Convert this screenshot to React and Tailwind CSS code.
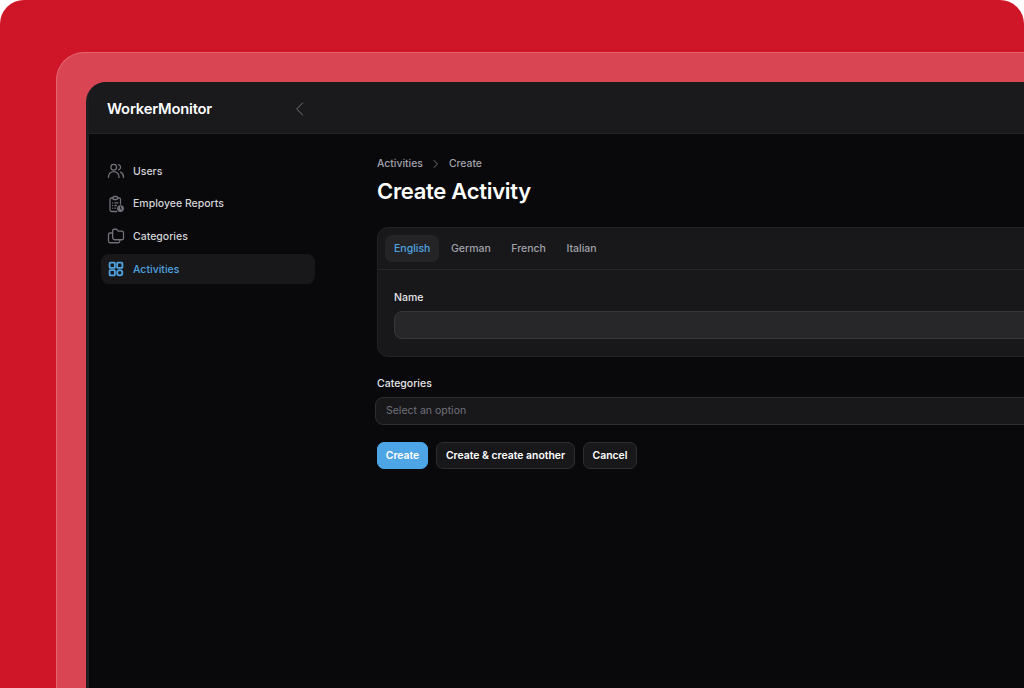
import React from "react";

const font = { fontFamily: "Inter, sans-serif" };

function UsersIcon() {
  return (
    <svg viewBox="0 0 24 24" fill="none" stroke="currentColor" strokeWidth="1.7" strokeLinecap="round" strokeLinejoin="round" className="w-[18px] h-[18px]">
      <circle cx="9" cy="7" r="3.8" />
      <path d="M2 20.5v-.8a7 7 0 0 1 14 0v.8" />
      <path d="M15.5 3.4a3.8 3.8 0 0 1 0 7.2" />
      <path d="M22 20.5v-.8a7 7 0 0 0-3.8-6.2" />
    </svg>
  );
}

function ReportIcon() {
  return (
    <svg viewBox="0 0 24 24" fill="none" stroke="currentColor" strokeWidth="1.7" strokeLinecap="round" strokeLinejoin="round" className="w-[18px] h-[18px]">
      <path d="M8 4H6a2 2 0 0 0-2 2v14a2 2 0 0 0 2 2h7" />
      <path d="M14 4h2a2 2 0 0 1 2 2v6" />
      <rect x="8" y="2" width="6" height="4" rx="1.2" />
      <path d="M7.5 10.5h.01M10.5 10.5h4M7.5 14h.01M10.5 14h2M7.5 17.5h.01M10.5 17.5h1" />
      <circle cx="18" cy="18" r="4.5" fill="currentColor" stroke="none" />
      <path d="M18 15.8v2.4l1.5.8" stroke="#09090b" strokeWidth="1.2" />
    </svg>
  );
}

function FolderIcon() {
  return (
    <svg viewBox="0 0 24 24" fill="none" stroke="currentColor" strokeWidth="1.7" strokeLinecap="round" strokeLinejoin="round" className="w-[18px] h-[18px]">
      <path d="M7.5 15V5a2 2 0 0 1 2-2h3.2l2.3 2.6h5a2 2 0 0 1 2 2v7.4a2 2 0 0 1-2 2h-10a2 2 0 0 1-2-2Z" />
      <path d="M7.5 8H4a2 2 0 0 0-2 2v9a2 2 0 0 0 2 2h11a2 2 0 0 0 2-2v-2" />
    </svg>
  );
}

function GridIcon() {
  return (
    <svg viewBox="0 0 24 24" fill="none" stroke="currentColor" strokeWidth="2.4" strokeLinejoin="round" className="w-[18px] h-[18px]">
      <rect x="3.5" y="3.5" width="7" height="7" rx="0.8" />
      <rect x="13.5" y="3.5" width="7" height="7" rx="0.8" />
      <rect x="3.5" y="13.5" width="7" height="7" rx="0.8" />
      <circle cx="17" cy="17" r="3.5" />
    </svg>
  );
}

function NavItem({ icon, label, active }) {
  return (
    <div className={"flex items-center gap-[8px] h-[30px] px-[6px] rounded-[8px] text-[10.5px] font-medium " + (active ? "bg-[#18181b] text-[#4fa3e0]" : "text-[#d4d4d8]")}>
      <span className={active ? "text-[#4fa3e0]" : "text-[#71717a]"}>{icon}</span>
      <span className="pt-[1px]">{label}</span>
    </div>
  );
}

function Button({ children, primary, className }) {
  return (
    <div className={"h-[27px] flex items-center justify-center rounded-[7px] text-[10.4px] font-semibold text-white border " + (primary ? "bg-[#4ea5e6] border-[#4ea5e6]" : "bg-[#18181b] border-[#2e2e32]") + " " + className}>
      {children}
    </div>
  );
}

function App() {
  return (
    <div className="w-[1024px] h-[688px] overflow-hidden bg-white" style={font}>
      <div className="h-full bg-[#cf1528] rounded-t-[24px] pt-[52px] pl-[56px]">
        <div className="h-full bg-[#da4554] border-l border-t border-[#e4656f] rounded-tl-[28px] pt-[29px] pl-[29px]">
          <div className="h-full flex flex-col bg-[#09090b] border-l-[3px] border-[#1f1f22] rounded-tl-[20px] overflow-hidden">
            <header className="h-[52px] shrink-0 bg-[#1a1a1d] border-b border-[#232326] flex items-center pl-[18px]">
              <span className="w-[188px] pt-[4px] text-[14.75px] leading-none font-semibold text-white tracking-[-0.2px]">WorkerMonitor</span>
              <svg viewBox="0 0 24 24" fill="none" stroke="#71717a" strokeWidth="1.5" strokeLinecap="round" strokeLinejoin="round" className="w-[16px] h-[16px] mt-[2px] -ml-[3px]">
                <path d="M16 3 7 12l9 9" />
              </svg>
            </header>
            <div className="flex flex-1">
              <aside className="w-[288px] shrink-0 pt-[22px] pl-[12px] pr-[62px] flex flex-col gap-[2.67px]">
                <NavItem icon={<UsersIcon />} label="Users" />
                <NavItem icon={<ReportIcon />} label="Employee Reports" />
                <NavItem icon={<FolderIcon />} label="Categories" />
                <NavItem icon={<GridIcon />} label="Activities" active />
              </aside>
              <main className="flex-1 pt-[22px] min-w-0">
                <div className="flex items-center gap-[7px] text-[10.4px] leading-[16px] font-medium text-[#a1a1aa]">
                  <span>Activities</span>
                  <svg viewBox="0 0 24 24" fill="none" stroke="#71717a" strokeWidth="2" strokeLinecap="round" strokeLinejoin="round" className="w-[12px] h-[12px]">
                    <path d="m8 5 7 7-7 7" />
                  </svg>
                  <span>Create</span>
                </div>
                <h1 className="mt-[3px] text-[22px] leading-[32px] font-semibold text-white tracking-[-0.3px]">Create Activity</h1>
                <section className="mt-[20px] h-[130px] bg-[#18181b] border border-[#232326] rounded-[11px] w-[700px]">
                  <div className="h-[42px] border-b border-[#27272a] flex items-start pt-[7px] pl-[7px] gap-[2.5px] text-[10.5px] font-medium text-[#a1a1aa]">
                    <span className="h-[27px] px-[9px] flex items-center rounded-[7px] bg-[#242427] text-[#4fa3e0]">English</span>
                    <span className="h-[27px] px-[9px] flex items-center">German</span>
                    <span className="h-[27px] px-[9px] flex items-center">French</span>
                    <span className="h-[27px] px-[9px] flex items-center">Italian</span>
                  </div>
                  <div className="pt-[20px] px-[16px]">
                    <div className="text-[10.5px] leading-[16px] font-medium text-[#e4e4e7]">Name</div>
                    <div className="mt-[5px] h-[28px] rounded-[8px] bg-[#27272a] border border-[#36363a]" />
                  </div>
                </section>
                <div className="mt-[19px] text-[10.5px] leading-[16px] font-medium text-[#e4e4e7]">Categories</div>
                <div className="mt-[5px] -ml-[2px] h-[28px] w-[702px] flex items-center pl-[10px] rounded-[8px] bg-[#18181b] border border-[#2e2e32] text-[10.5px] text-[#71717a]">Select an option</div>
                <div className="mt-[17px] flex gap-[8px]">
                  <Button primary className="w-[51px]">Create</Button>
                  <Button className="w-[139px]">Create &amp; create another</Button>
                  <Button className="w-[54px]">Cancel</Button>
                </div>
              </main>
            </div>
          </div>
        </div>
      </div>
    </div>
  );
}

export default App;
